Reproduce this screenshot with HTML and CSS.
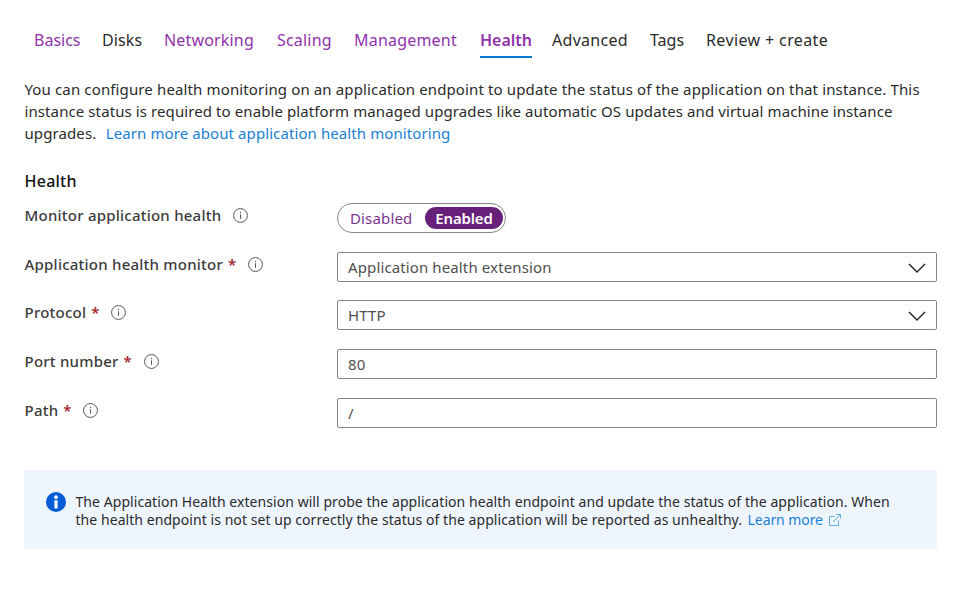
FILE: index.html
```
<!DOCTYPE html>
<html lang="en">
<head>
<meta charset="utf-8">
<title>Health</title>
<link rel="stylesheet" href="styles.css">
</head>
<body>
<svg class="defs" width="0" height="0">
  <symbol id="info" viewBox="0 0 16 16"><circle cx="8" cy="8" r="7.4" fill="none" stroke="#555" stroke-width="1.05"/><path d="M8 6.7v4.8" stroke="#555" stroke-width="1.05"/><circle cx="8" cy="4.8" r=".7" fill="#555"/></symbol>
  <symbol id="chevron" viewBox="0 0 18 10"><path d="M1 1l8 8 8-8" fill="none" stroke="#222" stroke-width="1.4"/></symbol>
</svg>
<nav class="tabs">
  <a class="tab visited">Basics</a>
  <a class="tab">Disks</a>
  <a class="tab visited">Networking</a>
  <a class="tab visited">Scaling</a>
  <a class="tab visited">Management</a>
  <a class="tab visited active">Health</a>
  <a class="tab">Advanced</a>
  <a class="tab">Tags</a>
  <a class="tab">Review + create</a>
</nav>
<main class="content">
  <p class="intro"><span class="first">You can configure health monitoring on an application endpoint to update the status of the application on that instance. This</span><br>instance status is required to enable platform managed upgrades like automatic OS updates and virtual machine instance<br>upgrades.<a class="link intro-link">Learn more about application health monitoring</a></p>
  <h2 class="heading">Health</h2>
  <form class="form">
    <div class="label">Monitor application health<svg class="info"><use href="#info"/></svg></div>
    <div class="toggle"><span class="option">Disabled</span><span class="option selected">Enabled</span></div>

    <div class="label">Application health monitor<b class="required">*</b><svg class="info"><use href="#info"/></svg></div>
    <div class="field">Application health extension<svg class="chevron"><use href="#chevron"/></svg></div>

    <div class="label">Protocol<b class="required">*</b><svg class="info"><use href="#info"/></svg></div>
    <div class="field">HTTP<svg class="chevron"><use href="#chevron"/></svg></div>

    <div class="label">Port number<b class="required">*</b><svg class="info"><use href="#info"/></svg></div>
    <div class="field">80</div>

    <div class="label">Path<b class="required">*</b><svg class="info"><use href="#info"/></svg></div>
    <div class="field">/</div>
  </form>
  <aside class="notice">
    <svg class="notice-icon" viewBox="0 0 20 20"><circle cx="10" cy="10" r="10" fill="#015cda"/><circle cx="10" cy="5.2" r="1.9" fill="#fff"/><path d="M8.4 8.3h3.2v8.2H8.4z" fill="#fff"/></svg>
    <p class="notice-text">The Application Health extension will probe the application health endpoint and update the status of the application. When<br>the health endpoint is not set up correctly the status of the application will be reported as unhealthy.<a class="link notice-link">Learn more<svg class="external" viewBox="0 0 12 12"><path d="M5.5 2.5h-5v9h9v-5M4 8l7.3-7.3M7.3.5h4.2v4.2" fill="none" stroke="#4fa8dc" stroke-width=".9"/></svg></a></p>
  </aside>
</main>
</body>
</html>
```
FILE: styles.css
```
* { box-sizing: border-box; }
body { margin: 0; background: #fff; color: #2b2b2b; font: 400 15px/22px "Noto Sans", "Open Sans", sans-serif; }
p, h2 { margin: 0; }
.defs { position: absolute; }
.link { color: #1a80d3; }

.tabs { display: flex; gap: 22px; padding: 27px 0 0 34px; white-space: nowrap; }
.tab { height: 31px; font-size: 16px; line-height: 26px; letter-spacing: .2px; width: 46px; }
.tab:nth-child(1) { letter-spacing: 0; }
.tab:nth-child(2) { width: 40px; letter-spacing: .1px; }
.tab:nth-child(3) { width: 91px; letter-spacing: .17px; }
.tab:nth-child(4) { width: 55px; }
.tab:nth-child(5) { width: 104px; }
.tab:nth-child(6) { width: 52px; letter-spacing: 0; margin-right: -2px; }
.tab:nth-child(7) { width: 76px; letter-spacing: .3px; }
.tab:nth-child(8) { width: 34px; letter-spacing: 0; }
.tab:nth-child(9) { width: 123px; letter-spacing: .38px; }
.visited { color: #8f33ab; }
.active { font-weight: 600; border-bottom: 2px solid #0078d4; }

.content { padding: 20px 30px 0 24px; }
.intro { padding-left: .5px; letter-spacing: .095px; white-space: nowrap; }
.first { letter-spacing: .133px; }
.intro-link { margin-left: 9.5px; letter-spacing: .09px; }
.heading { margin-top: 26px; padding-left: .5px; font-size: 16px; line-height: 22px; font-weight: 500; color: #111; letter-spacing: .25px; }

.form { display: grid; grid-template-columns: 313px 600px; grid-template-rows: 49px 48px 49px 49px 30px; margin-top: 11px; align-items: start; }
.label { display: flex; align-items: center; height: 22px; margin-top: 1px; padding-left: .5px; font-weight: 500; color: #3b3b3b; letter-spacing: .23px; }
.required { width: 8px; color: #a4262c; margin-left: 5px; font-weight: 600; letter-spacing: 0; }
.info { width: 15px; height: 15px; margin-left: 12px; margin-top: 1px; }
.field { display: flex; align-items: center; justify-content: space-between; height: 30px; padding: 0 10px; border: 1px solid #858585; border-radius: 2px; color: #505050; letter-spacing: .12px; }
.chevron { width: 18px; height: 10px; margin-top: 2px; }
.toggle { display: flex; align-items: center; width: 169px; height: 30px; padding-left: 12px; border: 1px solid #858585; border-radius: 15px; color: #7d3490; }
.option { width: 75px; line-height: 22px; letter-spacing: .15px; }
.selected { width: 78px; border-radius: 11px; text-align: center; background: #68217a; color: #fff; font-weight: 600; letter-spacing: -.15px; }

.notice { display: flex; gap: 9.5px; height: 79px; margin-top: 42px; padding: 23px 0 0 22px; border-radius: 2px; background: #eff5ff; }
.notice-icon { width: 20px; height: 20px; margin-top: -1px; }
.notice-text { font-size: 14px; line-height: 18px; letter-spacing: .06px; white-space: nowrap; }
.notice-link { margin-left: 5.5px; letter-spacing: -.08px; }
.external { width: 12px; height: 12px; margin-left: 6.5px; vertical-align: -1px; }
```
